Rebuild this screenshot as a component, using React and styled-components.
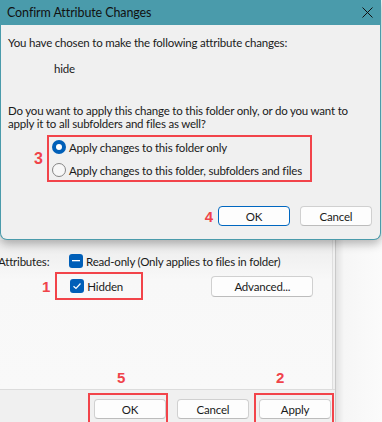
import React from "react";
import styled, { createGlobalStyle } from "styled-components";

const FONT = `"Lato", "Liberation Sans", sans-serif`;

const Global = createGlobalStyle`
  html, body { margin: 0; padding: 0; }
  body {
    width: 382px;
    height: 422px;
    overflow: hidden;
    background: #f7f7f7;
    font-family: ${FONT};
    font-size: 11.5px;
    letter-spacing: -0.2px;
    color: #1a1a1a;
  }
`;

const Screen = styled.div`
  width: 382px;
  height: 422px;
  display: flex;
  flex-direction: column;
  overflow: hidden;
  position: relative;
`;

const Dialog = styled.div`
  width: 381px;
  flex: none;
  background: #f0f0f0;
  border: 1px solid #4a9bab;
  border-top: none;
  border-radius: 0 0 7px 7px;
  box-sizing: border-box;
  box-shadow: 0 4px 10px rgba(0, 0, 0, 0.28);
  position: relative;
  z-index: 2;
  display: flex;
  flex-direction: column;
`;

const TitleBar = styled.div`
  height: 25px;
  background: #4a9bab;
  display: flex;
  align-items: center;
  justify-content: space-between;
  padding: 0 8px 0 7px;
  margin: 0 -1px;
  font-size: 12.5px;
  letter-spacing: -0.1px;
  color: #111;
`;

const Body = styled.div`
  padding: 10px 8px 13px 7px;
  display: flex;
  flex-direction: column;
`;

const Line = styled.div`
  line-height: 16px;
  padding-left: ${(p) => p.indent || 0}px;
  margin-top: ${(p) => p.mt || 0}px;
  white-space: nowrap;
`;

const Para = styled.div`
  line-height: 13px;
  margin-top: 27px;
  white-space: nowrap;
`;

const Marker = styled.span`
  font-family: "Liberation Sans", Arial, sans-serif;
  font-weight: bold;
  font-size: ${(p) => p.size || 15}px;
  letter-spacing: 0;
  color: #f0434a;
  line-height: 1;
  margin-right: ${(p) => p.mr || 0}px;
`;

const ChoiceRow = styled.div`
  display: flex;
  align-items: center;
  margin-top: 5px;
  gap: 4px;
  padding-left: 26px;
`;

const RedBox = styled.div`
  border: 2px solid #f2444a;
  box-sizing: border-box;
  width: ${(p) => p.w}px;
  height: ${(p) => p.h}px;
  margin-left: ${(p) => p.ml || 0}px;
  display: flex;
  flex-direction: ${(p) => (p.col ? "column" : "row")};
  align-items: ${(p) => (p.col ? "stretch" : "center")};
  justify-content: flex-start;
  gap: ${(p) => p.gap || 0}px;
  padding: ${(p) => p.pad || "0"};
`;

const RadioRow = styled.label`
  display: flex;
  align-items: center;
  height: 20px;
  gap: 3px;
  padding-left: 3px;
  white-space: nowrap;
`;

const Radio = styled.span`
  width: 14px;
  height: 14px;
  border-radius: 50%;
  box-sizing: border-box;
  flex: none;
  background: ${(p) => (p.checked ? "#005fb8" : "#f7f7f7")};
  border: ${(p) => (p.checked ? "none" : "1px solid #858585")};
  display: flex;
  align-items: center;
  justify-content: center;
  &::after {
    content: "";
    display: ${(p) => (p.checked ? "block" : "none")};
    width: 6px;
    height: 6px;
    border-radius: 50%;
    background: #fff;
  }
`;

const ButtonRow = styled.div`
  display: flex;
  justify-content: flex-end;
  align-items: center;
  gap: 10px;
  margin-top: 24px;
`;

const Button = styled.button`
  width: ${(p) => p.w || 72}px;
  height: ${(p) => p.h || 20}px;
  margin-left: ${(p) => p.ml || 0}px;
  box-sizing: border-box;
  border-radius: 4px;
  border: 1px solid ${(p) => (p.primary ? "#0067c0" : "#d0d0d0")};
  border-bottom-color: ${(p) => (p.primary ? "#0067c0" : "#bcbcbc")};
  background: #fdfdfd;
  font-family: ${FONT};
  font-size: 11.5px;
  letter-spacing: -0.2px;
  color: #1a1a1a;
  padding: 0;
  display: flex;
  align-items: center;
  justify-content: center;
`;

const Lower = styled.div`
  flex: 1;
  display: flex;
  min-height: 0;
`;

const Window = styled.div`
  width: 336px;
  flex: none;
  display: flex;
  flex-direction: column;
  border-right: 1px solid #c9c9c9;
  box-sizing: border-box;
  background: #f0f0f0;
`;

const Page = styled.div`
  flex: 1;
  background: linear-gradient(#ececec, #f8f8f8 40px, #f9f9f9);
  border-right: 1px solid #dedede;
  margin-right: 2px;
  display: flex;
  flex-direction: column;
  padding-top: 14px;
`;

const AttrRow = styled.div`
  display: flex;
  align-items: center;
  height: 14px;
`;

const AttrLabel = styled.span`
  width: 71px;
  margin-left: -2px;
  flex: none;
`;

const CheckWrap = styled.label`
  display: flex;
  align-items: center;
  gap: 3px;
  white-space: nowrap;
`;

const Check = styled.span`
  width: 14px;
  height: 14px;
  border-radius: 3px;
  background: #005fb8;
  flex: none;
  display: flex;
  align-items: center;
  justify-content: center;
`;

const HiddenRow = styled.div`
  display: flex;
  align-items: center;
  margin-top: 4px;
  padding-left: 42px;
`;

const Spacer = styled.div`
  flex: 1;
`;

const NumberRow = styled.div`
  position: relative;
  height: 16px;
  margin-bottom: 3px;
`;

const Num = styled(Marker)`
  position: absolute;
  left: ${(p) => p.x}px;
  top: 0;
`;

const BottomBar = styled.div`
  height: 33px;
  border-top: 1px solid #dcdcdc;
  background: #f0f0f0;
  display: flex;
  align-items: flex-start;
  padding-top: 3px;
  box-sizing: border-box;
`;

const Slot = styled.div`
  box-sizing: border-box;
  width: ${(p) => p.w}px;
  height: 40px;
  margin-left: ${(p) => p.ml || 0}px;
  border: ${(p) => (p.marked ? "2px solid #f2444a" : "2px solid transparent")};
  padding: 4px 0 0 ${(p) => p.pl || 0}px;
  flex: none;
`;

const Outside = styled.div`
  flex: 1;
  background: linear-gradient(90deg, #e2e2e2, #f6f6f6 8px, #fbfbfb);
`;

const CloseIcon = () => (
  <svg width="11" height="11" viewBox="0 0 11 11">
    <path d="M0.5 0.5 L10.5 10.5 M10.5 0.5 L0.5 10.5" stroke="#111" strokeWidth="1" />
  </svg>
);

const Tick = () => (
  <svg width="10" height="8" viewBox="0 0 10 8">
    <path d="M1.5 4.2 L4 6.5 L8.5 1.5" stroke="#fff" strokeWidth="1.2" fill="none" />
  </svg>
);

const Dash = () => (
  <svg width="8" height="2" viewBox="0 0 8 2">
    <rect x="0" y="0" width="8" height="1.3" fill="#fff" />
  </svg>
);

export default function App() {
  return (
    <Screen>
      <Global />
      <Dialog>
        <TitleBar>
          <span>Confirm Attribute Changes</span>
          <CloseIcon />
        </TitleBar>
        <Body>
          <Line>You have chosen to make the following attribute changes:</Line>
          <Line indent={46} mt={10}>hide</Line>
          <Para>
            Do you want to apply this change to this folder only, or do you want to
            <br />
            apply it to all subfolders and files as well?
          </Para>
          <ChoiceRow>
            <Marker size={16}>3</Marker>
            <RedBox w={265} h={47} col gap={3}>
              <RadioRow>
                <Radio checked />
                Apply changes to this folder only
              </RadioRow>
              <RadioRow>
                <Radio />
                Apply changes to this folder, subfolders and files
              </RadioRow>
            </RedBox>
          </ChoiceRow>
          <ButtonRow>
            <Marker mr={-5}>4</Marker>
            <Button primary>OK</Button>
            <Button>Cancel</Button>
          </ButtonRow>
        </Body>
      </Dialog>
      <Lower>
        <Window>
          <Page>
            <AttrRow>
              <AttrLabel>Attributes:</AttrLabel>
              <CheckWrap>
                <Check>
                  <Dash />
                </Check>
                Read-only (Only applies to files in folder)
              </CheckWrap>
            </AttrRow>
            <HiddenRow>
              <Marker>1</Marker>
              <RedBox w={88} h={28} ml={5} pad="0 0 0 13px">
                <CheckWrap>
                  <Check>
                    <Tick />
                  </Check>
                  Hidden
                </CheckWrap>
              </RedBox>
              <Button w={102} h={21} ml={68}>Advanced...</Button>
            </HiddenRow>
            <Spacer />
            <NumberRow>
              <Num x={117}>5</Num>
              <Num x={276}>2</Num>
            </NumberRow>
          </Page>
          <BottomBar>
            <Slot marked w={80} ml={88} pl={4}>
              <Button>OK</Button>
            </Slot>
            <Slot w={76} ml={5} pl={2}>
              <Button>Cancel</Button>
            </Slot>
            <Slot marked w={80} ml={5} pl={3}>
              <Button>Apply</Button>
            </Slot>
          </BottomBar>
        </Window>
        <Outside />
      </Lower>
    </Screen>
  );
}
